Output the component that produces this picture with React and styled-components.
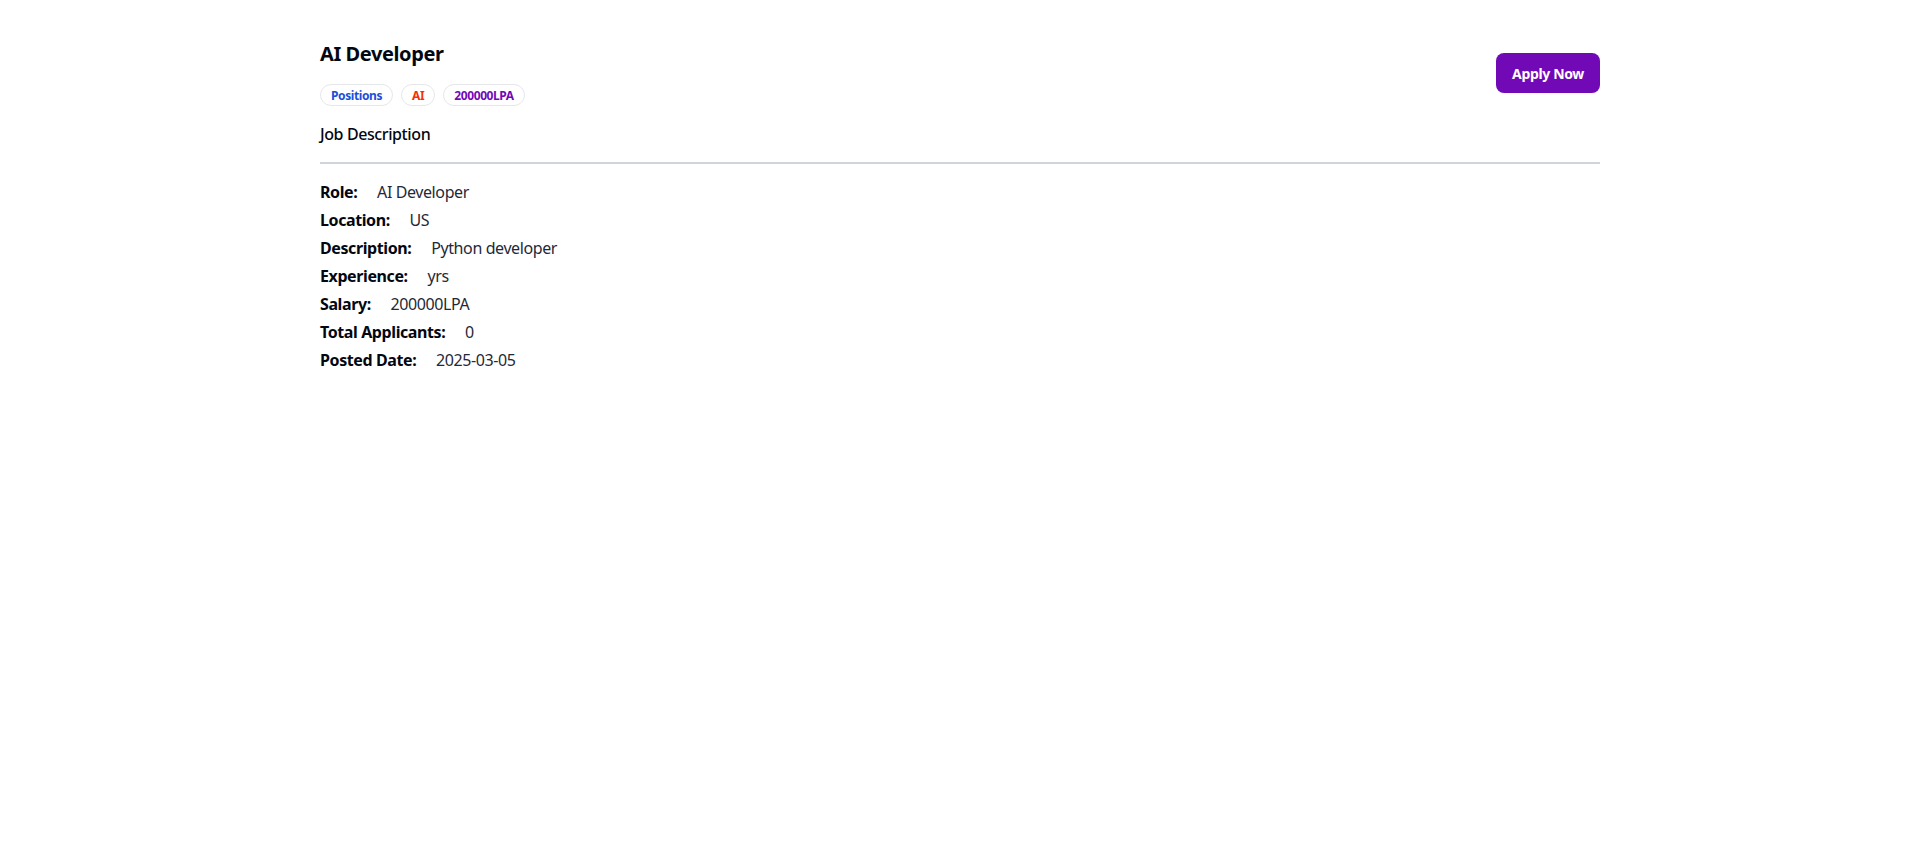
import React from "react";
import styled, { createGlobalStyle } from "styled-components";

const GlobalStyle = createGlobalStyle`
  body {
    margin: 0;
    background: #ffffff;
    font-family: "Noto Sans", "Open Sans", "Liberation Sans", sans-serif;
    letter-spacing: -0.025em;
    color: #030712;
  }
  * {
    box-sizing: border-box;
  }
`;

const Page = styled.div`
  max-width: 1280px;
  margin: 40px auto;
`;

const Header = styled.div`
  display: flex;
  align-items: center;
  justify-content: space-between;
`;

const Title = styled.h1`
  margin: 0;
  font-size: 20px;
  line-height: 28px;
  font-weight: 700;
`;

const Badges = styled.div`
  display: flex;
  align-items: center;
  gap: 8px;
  margin-top: 16px;
`;

const Badge = styled.span`
  display: inline-flex;
  align-items: center;
  height: 22px;
  padding: 0 10px;
  border: 1px solid #e5e7eb;
  border-radius: 9999px;
  font-size: 12px;
  font-weight: 700;
  color: ${(p) => p.$color};
`;

const ApplyButton = styled.button`
  height: 40px;
  padding: 0 16px;
  border: none;
  border-radius: 8px;
  background: #7209b7;
  color: #ffffff;
  font-family: inherit;
  font-size: 14px;
  font-weight: 700;
  letter-spacing: -0.025em;
  cursor: pointer;
`;

const SectionTitle = styled.h2`
  margin: 16px 0 0;
  padding-bottom: 16px;
  font-size: 16px;
  line-height: 24px;
  font-weight: 500;
  border-bottom: 2px solid #d1d5db;
`;

const Details = styled.div`
  margin-top: 16px;
  display: flex;
  flex-direction: column;
  gap: 4px;
`;

const Row = styled.div`
  font-size: 16px;
  line-height: 24px;
  font-weight: 700;
`;

const Value = styled.span`
  padding-left: 16px;
  font-weight: 400;
  color: #1f2937;
`;

const details = [
  ["Role:", "AI Developer"],
  ["Location:", "US"],
  ["Description:", "Python developer"],
  ["Experience:", "yrs"],
  ["Salary:", "200000LPA"],
  ["Total Applicants:", "0"],
  ["Posted Date:", "2025-03-05"],
];

export default function App() {
  return (
    <>
      <GlobalStyle />
      <Page>
        <Header>
          <div>
            <Title>AI Developer</Title>
            <Badges>
              <Badge $color="#1d4ed8">Positions</Badge>
              <Badge $color="#f83002">AI</Badge>
              <Badge $color="#7209b7">200000LPA</Badge>
            </Badges>
          </div>
          <ApplyButton>Apply Now</ApplyButton>
        </Header>
        <SectionTitle>Job Description</SectionTitle>
        <Details>
          {details.map(([label, value]) => (
            <Row key={label}>
              {label} <Value>{value}</Value>
            </Row>
          ))}
        </Details>
      </Page>
    </>
  );
}
